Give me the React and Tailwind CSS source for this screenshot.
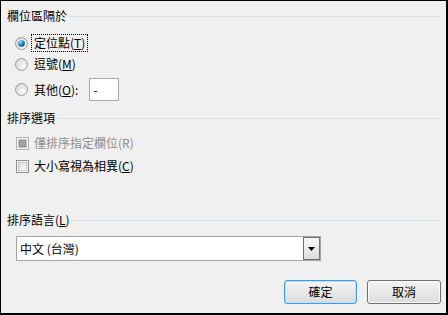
import React from "react";

const font = { fontFamily: '"Noto Sans CJK TC", "Noto Sans", sans-serif' };

function Radio({ checked }) {
  return (
    <svg width="13" height="13" viewBox="0 0 13 13" className="shrink-0">
      <defs>
        <radialGradient id="rbg" cx="0.7" cy="0.7" r="0.8">
          <stop offset="0" stopColor="#ffffff" />
          <stop offset="1" stopColor="#d4d4d4" />
        </radialGradient>
        <radialGradient id="rdot" cx="0.35" cy="0.3" r="0.8">
          <stop offset="0" stopColor="#9ee0ff" />
          <stop offset="0.45" stopColor="#2a8fd0" />
          <stop offset="1" stopColor="#0b3f6b" />
        </radialGradient>
      </defs>
      <circle cx="6.5" cy="6.5" r="6" fill="url(#rbg)" stroke="#9a9a9a" strokeWidth="1" />
      <circle cx="6.5" cy="6.5" r="4.3" fill="none" stroke="#e8e8e8" strokeWidth="1" />
      {checked && <circle cx="6.5" cy="6.5" r="3.3" fill="url(#rdot)" />}
    </svg>
  );
}

function Check({ disabled }) {
  return (
    <svg width="13" height="13" viewBox="0 0 13 13" className="shrink-0">
      <defs>
        <linearGradient id="cbg" x1="0" y1="0" x2="1" y2="1">
          <stop offset="0" stopColor="#d8d8d8" />
          <stop offset="1" stopColor="#ffffff" />
        </linearGradient>
      </defs>
      <rect x="0.5" y="0.5" width="12" height="12" fill="#f6f6f6" stroke={disabled ? "#b0b0b0" : "#8e8f8f"} />
      {disabled ? (
        <rect x="3" y="3" width="7" height="7" fill="#a2a2a2" stroke="#8c8c8c" strokeWidth="1" />
      ) : (
        <rect x="2.5" y="2.5" width="8" height="8" fill="url(#cbg)" stroke="#c8c8c8" />
      )}
    </svg>
  );
}

function Header({ children, className = "" }) {
  return (
    <div className={"flex items-center h-4 " + className}>
      <span className="text-[12px] leading-4 text-black whitespace-nowrap">{children}</span>
      <div className="flex-1 h-px bg-[#d5dfe5] ml-[3px]" />
    </div>
  );
}

export default function App() {
  return (
    <div
      style={font}
      className="w-[448px] h-[315px] bg-[#f0f0f0] border-black border-l border-t border-r-2 border-b-2 box-border pl-[6px] pr-[5px] flex flex-col overflow-hidden"
    >
      <Header className="mt-[7px]">欄位區隔於</Header>

      <div className="flex items-center h-[18px] mt-[10px] ml-[8px]">
        <Radio checked />
        <span className="ml-[3px] border border-dotted border-black px-[2px] text-[12px] leading-4 text-black">
          定位點(<span className="underline">T</span>)
        </span>
      </div>

      <div className="flex items-center h-[18px] mt-[3px] ml-[8px]">
        <Radio />
        <span className="ml-[6px] text-[12px] leading-4 text-black">
          逗號(<span className="underline">M</span>)
        </span>
      </div>

      <div className="flex items-center h-[23px] mt-[5px] ml-[8px]">
        <Radio />
        <span className="ml-[6px] text-[12px] leading-4 text-black">
          其他(<span className="underline">O</span>):
        </span>
        <div className="ml-[11px] w-[30px] h-[23px] bg-white border border-[#acacac] flex items-center pl-[3px] text-[12px] leading-4 text-black">
          -
        </div>
      </div>

      <Header className="mt-[9px]">排序選項</Header>

      <div className="flex items-center h-[18px] mt-[8px] ml-[9px]">
        <Check disabled />
        <span className="ml-[5px] text-[12px] leading-4 text-[#8d8d8d]">僅排序指定欄位(R)</span>
      </div>

      <div className="flex items-center h-[18px] mt-[5px] ml-[9px]">
        <Check />
        <span className="ml-[5px] text-[12px] leading-4 text-black">
          大小寫視為相異(<span className="underline">C</span>)
        </span>
      </div>

      <Header className="mt-[37px]">
        排序語言(<span className="underline">L</span>)
      </Header>

      <div className="mt-[8px] ml-[9px] w-[305px] h-[25px] bg-white border border-[#a5a5a5] flex items-center">
        <span className="flex-1 pl-[3px] text-[12px] leading-4 text-black">中文 (台灣)</span>
        <div className="w-[17px] h-[23px] border border-[#6f6f6f] bg-gradient-to-b from-[#f8f8f8] to-[#dcdcdc] flex items-center justify-center">
          <svg width="7" height="4" viewBox="0 0 7 4">
            <path d="M0 0 H7 L3.5 4 Z" fill="#000" />
          </svg>
        </div>
      </div>

      <div className="mt-[19px] flex justify-end gap-[10px]">
        <button className="w-[73px] h-[24px] rounded-[3px] border border-[#3c9ee0] shadow-[inset_0_0_0_1px_#b7e2fb] bg-gradient-to-b from-[#f4f4f4] to-[#dcdcdc] text-[12px] leading-4 text-black">
          確定
        </button>
        <button className="w-[74px] h-[24px] rounded-[3px] border border-[#707070] shadow-[inset_0_0_0_1px_#fbfbfb] bg-gradient-to-b from-[#f4f4f4] to-[#dcdcdc] text-[12px] leading-4 text-black">
          取消
        </button>
      </div>
    </div>
  );
}
